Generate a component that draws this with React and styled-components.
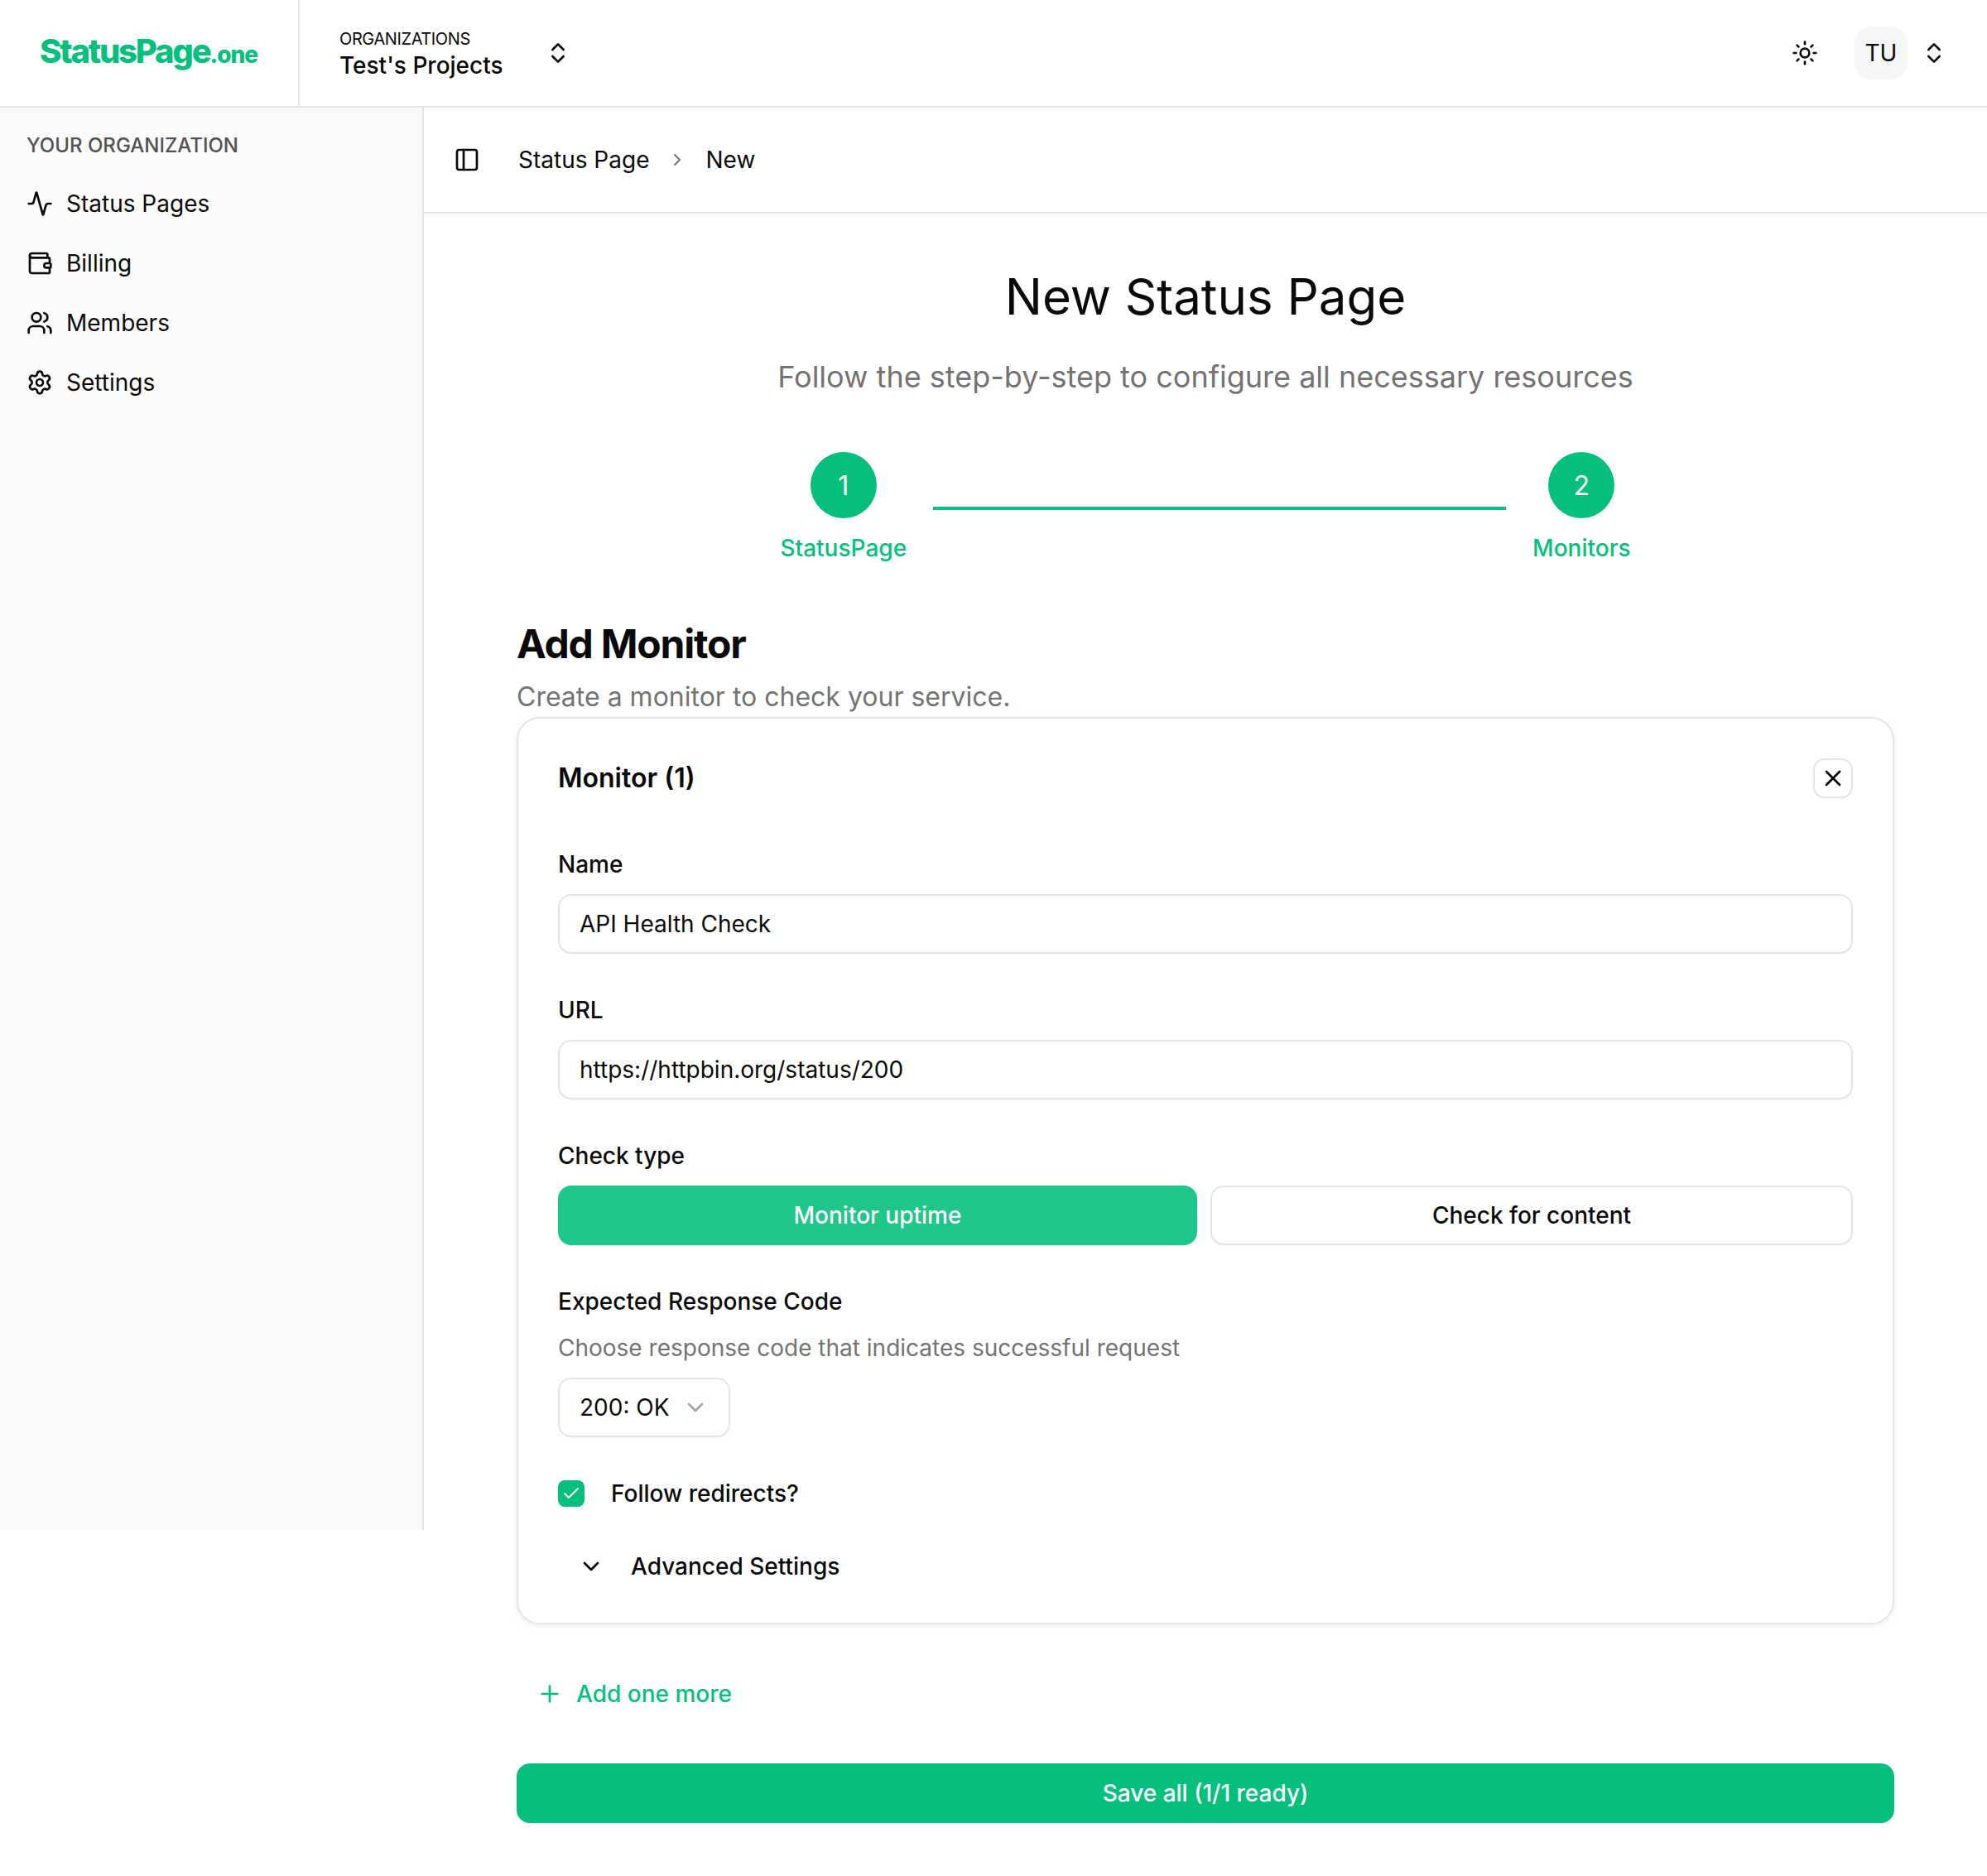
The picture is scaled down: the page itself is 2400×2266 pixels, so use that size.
import React from "react";
import styled, { createGlobalStyle } from "styled-components";
import {
  Activity,
  Check,
  ChevronDown,
  ChevronRight,
  ChevronsUpDown,
  PanelLeft,
  Plus,
  Settings,
  Sun,
  Users,
  Wallet,
  X,
} from "lucide-react";

const GREEN = "#05c07d";
const INK = "#0a0a0a";
const MUTED = "#737373";
const LINE = "#e5e5e5";

const GlobalStyle = createGlobalStyle`
  * {
    box-sizing: border-box;
  }
  body {
    margin: 0;
    background: #ffffff;
    color: ${INK};
    font-family: Inter, "Liberation Sans", sans-serif;
  }
`;

const navItems = [
  { label: "Status Pages", Icon: Activity },
  { label: "Billing", Icon: Wallet },
  { label: "Members", Icon: Users },
  { label: "Settings", Icon: Settings },
];

export default function App() {
  return (
    <>
      <GlobalStyle />
      <TopBar>
        <LogoCell>
          <Logo>
            StatusPage<LogoSuffix>.one</LogoSuffix>
          </Logo>
        </LogoCell>
        <OrgCell>
          <OrgText>
            <OrgCaption>ORGANIZATIONS</OrgCaption>
            <OrgName>Test's Projects</OrgName>
          </OrgText>
          <ChevronsUpDown size={32} />
        </OrgCell>
        <TopActions>
          <Sun size={32} />
          <Avatar>TU</Avatar>
          <ChevronsUpDown size={32} />
        </TopActions>
      </TopBar>
      <Body>
        <Sidebar>
          <SidebarTitle>YOUR ORGANIZATION</SidebarTitle>
          {navItems.map(({ label, Icon }) => (
            <NavRow key={label}>
              <Icon size={32} />
              {label}
            </NavRow>
          ))}
        </Sidebar>
        <Main>
          <Breadcrumbs>
            <PanelLeft size={32} />
            <Crumb>Status Page</Crumb>
            <CrumbArrow>
              <ChevronRight size={24} />
            </CrumbArrow>
            <Crumb>New</Crumb>
          </Breadcrumbs>
          <Content>
            <Title>New Status Page</Title>
            <Subtitle>Follow the step-by-step to configure all necessary resources</Subtitle>
            <Stepper>
              <Step>
                <StepCircle>1</StepCircle>
                <StepLabel>StatusPage</StepLabel>
              </Step>
              <StepLine />
              <Step>
                <StepCircle>2</StepCircle>
                <StepLabel>Monitors</StepLabel>
              </Step>
            </Stepper>
            <SectionTitle>Add Monitor</SectionTitle>
            <SectionText>Create a monitor to check your service.</SectionText>
            <Card>
              <CardHeader>
                <CardTitle>Monitor (1)</CardTitle>
                <CloseButton>
                  <X size={32} />
                </CloseButton>
              </CardHeader>
              <Field>
                <Label>Name</Label>
                <TextInput defaultValue="API Health Check" />
              </Field>
              <Field>
                <Label>URL</Label>
                <TextInput defaultValue="https://httpbin.org/status/200" />
              </Field>
              <Field>
                <Label>Check type</Label>
                <ToggleRow>
                  <ToggleButton $active>Monitor uptime</ToggleButton>
                  <ToggleButton>Check for content</ToggleButton>
                </ToggleRow>
              </Field>
              <Field>
                <Label>Expected Response Code</Label>
                <Hint>Choose response code that indicates successful request</Hint>
                <SelectBox>
                  200: OK
                  <SelectArrow>
                    <ChevronDown size={32} />
                  </SelectArrow>
                </SelectBox>
              </Field>
              <CheckRow>
                <CheckBox>
                  <Check size={24} strokeWidth={2} />
                </CheckBox>
                Follow redirects?
              </CheckRow>
              <AdvancedRow>
                <ChevronDown size={32} />
                Advanced Settings
              </AdvancedRow>
            </Card>
            <AddMore>
              <Plus size={32} />
              Add one more
            </AddMore>
            <SaveButton>Save all (1/1 ready)</SaveButton>
          </Content>
        </Main>
      </Body>
    </>
  );
}

const TopBar = styled.header`
  display: flex;
  align-items: stretch;
  height: 130px;
  border-bottom: 2px solid ${LINE};
`;

const LogoCell = styled.div`
  display: flex;
  align-items: center;
  width: 362px;
  padding-left: 48px;
  border-right: 2px solid ${LINE};
`;

const Logo = styled.div`
  color: ${GREEN};
  font-size: 40px;
  font-weight: 800;
  letter-spacing: -0.055em;
  line-height: 48px;
`;

const LogoSuffix = styled.span`
  font-size: 28px;
  letter-spacing: -0.04em;
`;

const OrgCell = styled.div`
  display: flex;
  align-items: center;
  gap: 50px;
  padding-left: 48px;
`;

const OrgText = styled.div`
  display: flex;
  flex-direction: column;
`;

const OrgCaption = styled.span`
  font-size: 20px;
  line-height: 28px;
  letter-spacing: -0.02em;
  margin-top: 2px;
`;

const OrgName = styled.span`
  font-size: 28px;
  font-weight: 500;
  line-height: 36px;
`;

const TopActions = styled.div`
  display: flex;
  align-items: center;
  margin-left: auto;
  padding-right: 48px;

  & > svg:first-child {
    margin-right: 44px;
  }
  & > svg:last-child {
    margin-left: 16px;
  }
`;

const Avatar = styled.div`
  display: flex;
  align-items: center;
  justify-content: center;
  width: 64px;
  height: 64px;
  border-radius: 20px;
  background: #f5f5f5;
  font-size: 28px;
`;

const Body = styled.div`
  display: flex;
  align-items: flex-start;
`;

const Sidebar = styled.aside`
  flex: 0 0 512px;
  height: 1718px;
  padding: 28px 32px 0;
  background: #fafafa;
  border-right: 2px solid ${LINE};
`;

const SidebarTitle = styled.div`
  color: #525252;
  font-size: 24px;
  font-weight: 500;
  line-height: 36px;
  margin-bottom: 16px;
`;

const NavRow = styled.div`
  display: flex;
  align-items: center;
  gap: 16px;
  height: 72px;
  font-size: 28px;
`;

const Main = styled.main`
  flex: 1;
  min-width: 0;
`;

const Breadcrumbs = styled.nav`
  display: flex;
  align-items: center;
  height: 128px;
  padding-left: 36px;
  border-bottom: 2px solid ${LINE};

  & > svg {
    margin-right: 46px;
  }
`;

const Crumb = styled.span`
  font-size: 28px;
`;

const CrumbArrow = styled.span`
  display: flex;
  margin: 0 22px;
  color: #737373;
`;

const Content = styled.div`
  display: flex;
  flex-direction: column;
  padding: 64px 112px;
`;

const Title = styled.h1`
  margin: 0;
  font-size: 60px;
  font-weight: 400;
  line-height: 72px;
  text-align: center;
`;

const Subtitle = styled.p`
  margin: 33px 0 0;
  color: ${MUTED};
  font-size: 36px;
  line-height: 56px;
  text-align: center;
`;

const Stepper = styled.div`
  display: flex;
  align-items: center;
  justify-content: center;
  margin-top: 63px;
`;

const Step = styled.div`
  display: flex;
  flex-direction: column;
  align-items: center;
  gap: 16px;
`;

const StepCircle = styled.div`
  display: flex;
  align-items: center;
  justify-content: center;
  width: 80px;
  height: 80px;
  border-radius: 50%;
  background: ${GREEN};
  color: #ffffff;
  font-size: 32px;
`;

const StepLabel = styled.div`
  color: ${GREEN};
  font-size: 28px;
  font-weight: 500;
  line-height: 40px;
`;

const StepLine = styled.div`
  width: 692px;
  height: 4px;
  margin: 0 32px;
  background: ${GREEN};
`;

const SectionTitle = styled.h2`
  margin: 64px 0 0;
  font-size: 48px;
  font-weight: 700;
  line-height: 64px;
  letter-spacing: -0.025em;
`;

const SectionText = styled.p`
  margin: 8px 0 0;
  color: ${MUTED};
  font-size: 32px;
  line-height: 48px;
`;

const Card = styled.section`
  display: flex;
  flex-direction: column;
  padding: 48px;
  border: 2px solid ${LINE};
  border-radius: 28px;
  box-shadow: 0 2px 6px rgba(0, 0, 0, 0.08);
`;

const CardHeader = styled.div`
  display: flex;
  align-items: center;
  justify-content: space-between;
  margin-bottom: 60px;
`;

const CardTitle = styled.h3`
  margin: 0;
  font-size: 32px;
  font-weight: 600;
  line-height: 48px;
`;

const CloseButton = styled.button`
  display: flex;
  align-items: center;
  justify-content: center;
  width: 48px;
  height: 48px;
  padding: 0;
  background: #ffffff;
  border: 2px solid ${LINE};
  border-radius: 14px;
  box-shadow: 0 1px 2px rgba(0, 0, 0, 0.05);
  color: #000000;
`;

const Field = styled.div`
  display: flex;
  flex-direction: column;
  align-items: stretch;
  margin-bottom: 48px;
`;

const Label = styled.label`
  margin-bottom: 16px;
  font-size: 28px;
  font-weight: 500;
  line-height: 40px;
`;

const Hint = styled.p`
  margin: 0 0 16px;
  color: ${MUTED};
  font-size: 28px;
  line-height: 40px;
`;

const TextInput = styled.input`
  height: 72px;
  padding: 0 24px;
  border: 2px solid ${LINE};
  border-radius: 16px;
  box-shadow: 0 1px 2px rgba(0, 0, 0, 0.05);
  color: ${INK};
  font-family: inherit;
  font-size: 28px;
  outline: none;
`;

const ToggleRow = styled.div`
  display: grid;
  grid-template-columns: 772fr 776fr;
  gap: 16px;
`;

const ToggleButton = styled.button`
  height: 72px;
  padding: 0;
  background: ${(props) => (props.$active ? "#1fc689" : "#ffffff")};
  border: ${(props) => (props.$active ? "none" : `2px solid ${LINE}`)};
  border-radius: 16px;
  box-shadow: 0 1px 2px rgba(0, 0, 0, 0.05);
  color: ${(props) => (props.$active ? "#ffffff" : INK)};
  font-family: inherit;
  font-size: 28px;
  font-weight: 500;
`;

const SelectBox = styled.div`
  display: flex;
  align-items: center;
  justify-content: space-between;
  width: 208px;
  height: 72px;
  padding: 0 24px;
  border: 2px solid ${LINE};
  border-radius: 16px;
  box-shadow: 0 1px 2px rgba(0, 0, 0, 0.05);
  font-size: 28px;
`;

const SelectArrow = styled.span`
  display: flex;
  color: #a3a3a3;
`;

const CheckRow = styled.div`
  display: flex;
  align-items: center;
  gap: 32px;
  height: 40px;
  margin-bottom: 48px;
  font-size: 28px;
  font-weight: 500;
`;

const CheckBox = styled.span`
  display: flex;
  align-items: center;
  justify-content: center;
  width: 32px;
  height: 32px;
  border-radius: 8px;
  background: ${GREEN};
  color: #ffffff;
`;

const AdvancedRow = styled.div`
  display: flex;
  align-items: center;
  gap: 32px;
  height: 40px;
  padding-left: 24px;
  font-size: 28px;
  font-weight: 500;
`;

const AddMore = styled.button`
  display: flex;
  align-items: center;
  gap: 16px;
  height: 72px;
  margin-top: 48px;
  padding: 0 24px;
  background: none;
  border: none;
  color: ${GREEN};
  font-family: inherit;
  font-size: 28px;
  font-weight: 500;
`;

const SaveButton = styled.button`
  height: 72px;
  margin-top: 48px;
  background: ${GREEN};
  border: none;
  border-radius: 16px;
  box-shadow: 0 1px 2px rgba(0, 0, 0, 0.05);
  color: #ffffff;
  font-family: inherit;
  font-size: 28px;
  font-weight: 500;
`;
